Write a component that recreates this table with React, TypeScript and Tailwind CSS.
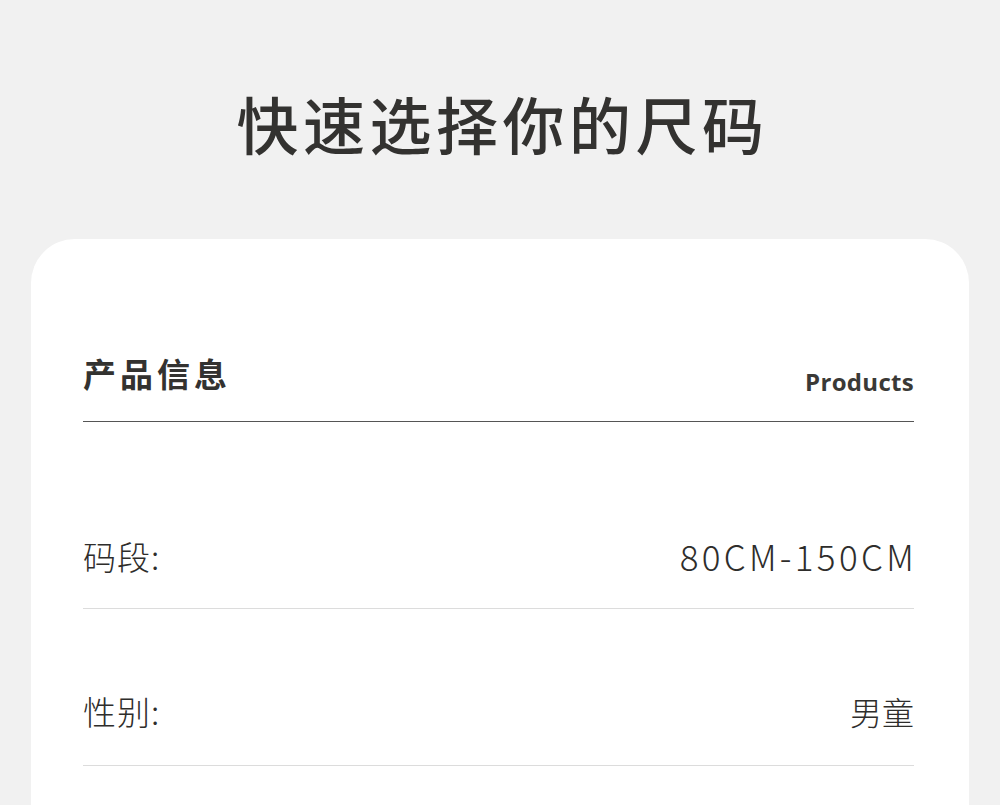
import React from 'react'

const rows = [
  { label: '码段:', value: '80CM-150CM', first: true },
  { label: '性别:', value: '男童', first: false },
]

export default function App() {
  return (
    <div
      className="min-h-[805px] w-[1000px] overflow-hidden bg-[#f1f1f1] text-[#333230]"
      style={{ fontFamily: '"Noto Sans CJK SC", "Noto Sans", sans-serif' }}
    >
      {/* Page title */}
      <h1 className="pt-[78px] pl-[5px] text-center text-[62px] font-medium leading-[90px] tracking-[4.5px]">
        快速选择你的尺码
      </h1>

      {/* Info card */}
      <div className="mx-[31px] mt-[71px] h-[600px] rounded-t-[44px] bg-white pl-[52px] pr-[55px] pt-[110px]">
        <div className="flex items-end justify-between border-b border-[#555] pb-[24px]">
          <span className="text-[33px] font-bold leading-[48px] tracking-[4px]">产品信息</span>
          <span
            className="text-[24px] font-bold leading-[30px] tracking-[0.3px] text-[#3a3936]"
            style={{ fontFamily: '"Open Sans", sans-serif' }}
          >
            Products
          </span>
        </div>

        {rows.map((r) => (
          <div
            key={r.label}
            className={
              r.first
                ? 'flex items-center justify-between border-b border-[#dcdcdc] pt-[110px] pb-[28px]'
                : 'flex items-center justify-between border-b border-[#dcdcdc] pt-[78px] pb-[30px]'
            }
          >
            <span className="text-[33px] font-light leading-[48px] tracking-[1px] text-[#2e2d2b]">{r.label}</span>
            {r.first ? (
              <span className="mr-[-3px] text-[35px] font-light leading-[48px] tracking-[3.3px] text-[#2e2d2b]">
                {r.value}
              </span>
            ) : (
              <span className="text-[32px] font-light leading-[48px] text-[#2e2d2b]">{r.value}</span>
            )}
          </div>
        ))}
      </div>
    </div>
  )
}
